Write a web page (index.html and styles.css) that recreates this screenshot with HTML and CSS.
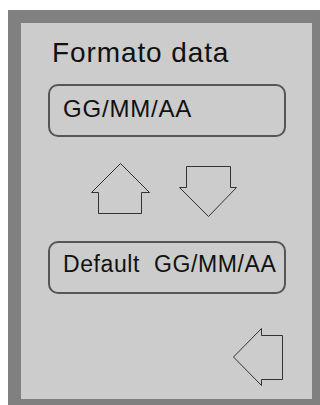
FILE: index.html
```html
<!DOCTYPE html>
<html lang="it">
<head>
    <meta charset="UTF-8">
    <meta name="viewport" content="width=device-width, initial-scale=1.0">
    <title>Formato data</title>
    <link rel="stylesheet" href="styles.css">
</head>
<body>

<div class="frame">
    <div class="panel">
        <!-- titolo -->
        <div class="title">Formato data</div>

        <!-- formato corrente -->
        <div class="field field-current">GG/MM/AA</div>

        <!-- su / giu -->
        <div class="arrows">
            <svg class="arrow-up" width="61" height="53" viewBox="0 0 61 53">
                <path d="M30.5 1.5 L1.5 30.5 H8.5 V51.5 H51.5 V30.5 H59.5 Z"/>
            </svg>
            <svg class="arrow-down" width="60" height="53" viewBox="0 0 60 53">
                <path d="M8.5 1.5 H52.5 V22.5 H58.5 L30.5 51.5 L1.5 22.5 H8.5 Z"/>
            </svg>
        </div>

        <!-- formato predefinito -->
        <div class="field field-default">Default&nbsp; GG/MM/AA</div>

        <!-- indietro -->
        <div class="back-row">
            <svg class="arrow-back" width="52" height="60" viewBox="0 0 52 60">
                <path d="M1.5 30 L29.5 1.5 V8.5 H50.5 V52.5 H29.5 V58.5 Z"/>
            </svg>
        </div>
    </div>
</div>

</body>
</html>
```

FILE: styles.css
```css
html, body {
    background-color: #ffffff;
}
body {
    margin: 10px 0 0 8px;
    font-family: "Liberation Sans", Arial, sans-serif;
    color: #111111;
}
.frame {
    box-sizing: border-box;
    width: 312px;
    height: 395px;
    padding: 13px 8px 6px 13px;
    background-color: #808080;
}
.panel {
    box-sizing: border-box;
    height: 376px;
    padding: 14px 0 0 27px;
    background-color: #cccccc;
}
.title {
    padding-left: 4px;
    font-size: 28px;
    line-height: 32px;
    letter-spacing: 0.9px;
}
.field {
    box-sizing: border-box;
    width: 238px;
    height: 53px;
    padding-left: 13px;
    border: 2px solid #555555;
    border-radius: 10px;
    white-space: nowrap;
}
.field-current {
    margin-top: 15px;
    padding-top: 9px;
    font-size: 24px;
    line-height: 27px;
    letter-spacing: 0.8px;
}
.field-default {
    margin-top: 23px;
    padding-top: 8px;
    font-size: 23px;
    line-height: 26px;
    letter-spacing: 0.6px;
}
.arrows {
    display: flex;
    align-items: flex-start;
    gap: 27px;
    margin-top: 25px;
    padding-left: 42px;
}
.arrows svg, .back-row svg {
    display: block;
}
.arrows path, .back-row path {
    fill: none;
    stroke: #333333;
    stroke-width: 1;
}
.arrow-down {
    margin-top: 3px;
}
.back-row {
    display: flex;
    justify-content: flex-end;
    width: 236px;
    margin-top: 33px;
}
```
